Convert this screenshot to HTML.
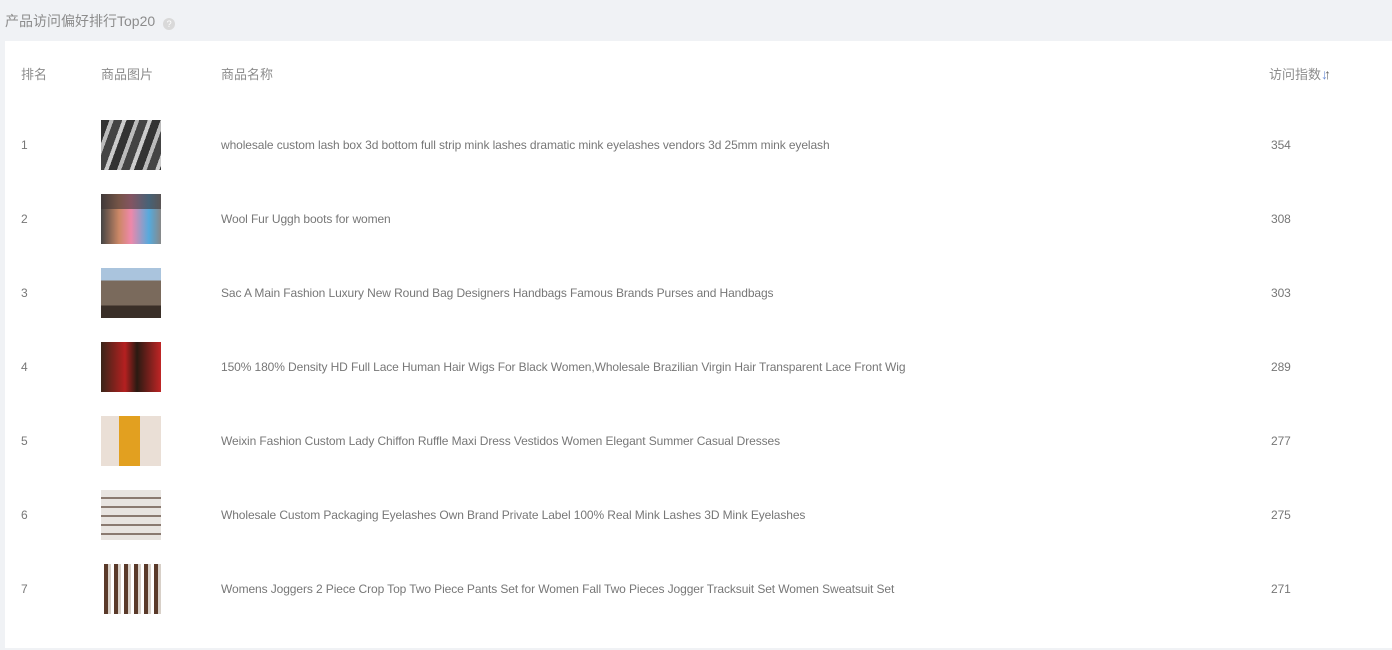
<!DOCTYPE html>
<html><head><meta charset="utf-8"><style>
body{margin:0;width:1392px;height:650px;background:#f0f2f5;font-family:"Liberation Sans","Noto Sans CJK SC",sans-serif;overflow:hidden;position:relative}
.title{position:absolute;left:5px;top:11px;font-size:14px;color:#8c8c8c}
.q{display:inline-block;width:12px;height:12px;border-radius:50%;background:#d9d9d9;color:#fff;font-size:9px;line-height:12px;text-align:center;vertical-align:-1px;margin-left:8px}
.card{position:absolute;left:5px;top:41px;width:1387px;height:607px;background:#fff}
.h,.c{position:absolute;font-size:13px;color:#8c8c8c}
.c{font-size:12px;color:#777;letter-spacing:-0.1px}
.img{position:absolute;left:96px;width:60px;height:50px}
</style></head><body>
<div class="title">产品访问偏好排行Top20<span class="q">?</span></div>
<div class="card">
<div class="h" style="left:16px;top:23px">排名</div>
<div class="h" style="left:96px;top:23px">商品图片</div>
<div class="h" style="left:216px;top:23px">商品名称</div>
<div class="h" style="left:1264px;top:23px">访问指数<span style="color:#6f8fd8;font-size:14px;font-weight:bold">↓</span><span style="font-size:14px;margin-left:-4px;color:#666">↑</span></div>

<div class="c" style="left:16px;top:97px">1</div>
<div class="img" style="top:79px;background:repeating-linear-gradient(110deg,#333 0 8px,#bbb 8px 12px,#444 12px 20px,#ccc 20px 24px)"></div>
<div class="c" style="left:216px;top:97px">wholesale custom lash box 3d bottom full strip mink lashes dramatic mink eyelashes vendors 3d 25mm mink eyelash</div>
<div class="c" style="left:1266px;top:97px">354</div>

<div class="c" style="left:16px;top:171px">2</div>
<div class="img" style="top:153px;background:linear-gradient(180deg,rgba(60,50,50,.6) 0 30%,rgba(0,0,0,0) 30%),linear-gradient(90deg,#444,#c86 30%,#e8a 50%,#5ad 80%,#888)"></div>
<div class="c" style="left:216px;top:171px">Wool Fur Uggh boots for women</div>
<div class="c" style="left:1266px;top:171px">308</div>

<div class="c" style="left:16px;top:245px">3</div>
<div class="img" style="top:227px;background:linear-gradient(180deg,#aac4dd 0 25%,#7a6a5c 25% 75%,#3a2f28 75%)"></div>
<div class="c" style="left:216px;top:245px">Sac A Main Fashion Luxury New Round Bag Designers Handbags Famous Brands Purses and Handbags</div>
<div class="c" style="left:1266px;top:245px">303</div>

<div class="c" style="left:16px;top:319px">4</div>
<div class="img" style="top:301px;background:linear-gradient(90deg,#3a2518 0,#b52020 40%,#2a1a12 60%,#c02525 100%)"></div>
<div class="c" style="left:216px;top:319px">150% 180% Density HD Full Lace Human Hair Wigs For Black Women,Wholesale Brazilian Virgin Hair Transparent Lace Front Wig</div>
<div class="c" style="left:1266px;top:319px">289</div>

<div class="c" style="left:16px;top:393px">5</div>
<div class="img" style="top:375px;background:linear-gradient(90deg,#eadfd6 0 30%,#e2a020 30% 65%,#eadfd6 65%)"></div>
<div class="c" style="left:216px;top:393px">Weixin Fashion Custom Lady Chiffon Ruffle Maxi Dress Vestidos Women Elegant Summer Casual Dresses</div>
<div class="c" style="left:1266px;top:393px">277</div>

<div class="c" style="left:16px;top:467px">6</div>
<div class="img" style="top:449px;background:repeating-linear-gradient(180deg,#e8e4e0 0 7px,#8a7a70 7px 9px)"></div>
<div class="c" style="left:216px;top:467px">Wholesale Custom Packaging Eyelashes Own Brand Private Label 100% Real Mink Lashes 3D Mink Eyelashes</div>
<div class="c" style="left:1266px;top:467px">275</div>

<div class="c" style="left:16px;top:541px">7</div>
<div class="img" style="top:523px;background:repeating-linear-gradient(90deg,#fff 0 3px,#5a3a2a 3px 7px,#d8d0c8 7px 10px)"></div>
<div class="c" style="left:216px;top:541px">Womens Joggers 2 Piece Crop Top Two Piece Pants Set for Women Fall Two Pieces Jogger Tracksuit Set Women Sweatsuit Set</div>
<div class="c" style="left:1266px;top:541px">271</div>
</div>
</body></html>
